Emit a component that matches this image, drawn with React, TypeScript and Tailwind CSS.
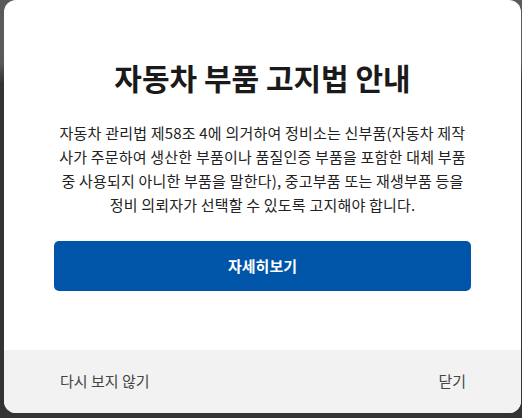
export default function App() {
  return (
    <div
      className="w-[522px] h-[418px] overflow-hidden bg-[#2b2b2b] bg-gradient-to-b from-[#5a5a5a] from-15% to-[#333] to-20%"
      style={{ fontFamily: '"Noto Sans CJK KR", "Noto Sans", sans-serif' }}
    >
      <div className="ml-[4px] w-[517px] h-[413px] bg-white rounded-[12px] overflow-hidden flex flex-col">
        {/* Body */}
        <div className="flex-1 px-[50px] pt-[57px] flex flex-col items-center">
          <h1 className="text-[30px] leading-[40px] font-bold text-[#1a1a1a]">
            자동차 부품 고지법 안내
          </h1>
          <p className="mt-[24px] text-[15px] leading-[24px] text-[#222] text-center tracking-[0.2px]">
            자동차 관리법 제58조 4에 의거하여 정비소는 신부품(자동차 제작
            <br />
            사가 주문하여 생산한 부품이나 품질인증 부품을 포함한 대체 부품
            <br />
            중 사용되지 아니한 부품을 말한다), 중고부품 또는 재생부품 등을
            <br />
            정비 의뢰자가 선택할 수 있도록 고지해야 합니다.
          </p>
          <button className="mt-[24px] w-full h-[50px] rounded-[5px] bg-[#0055a8] text-white text-[15px] font-bold">
            자세히보기
          </button>
        </div>

        {/* Footer */}
        <div className="h-[63px] bg-[#f2f2f2] flex items-center justify-between pl-[56px] pr-[55px] text-[15px] text-[#444]">
          <button>다시 보지 않기</button>
          <button>닫기</button>
        </div>
      </div>
    </div>
  );
}
